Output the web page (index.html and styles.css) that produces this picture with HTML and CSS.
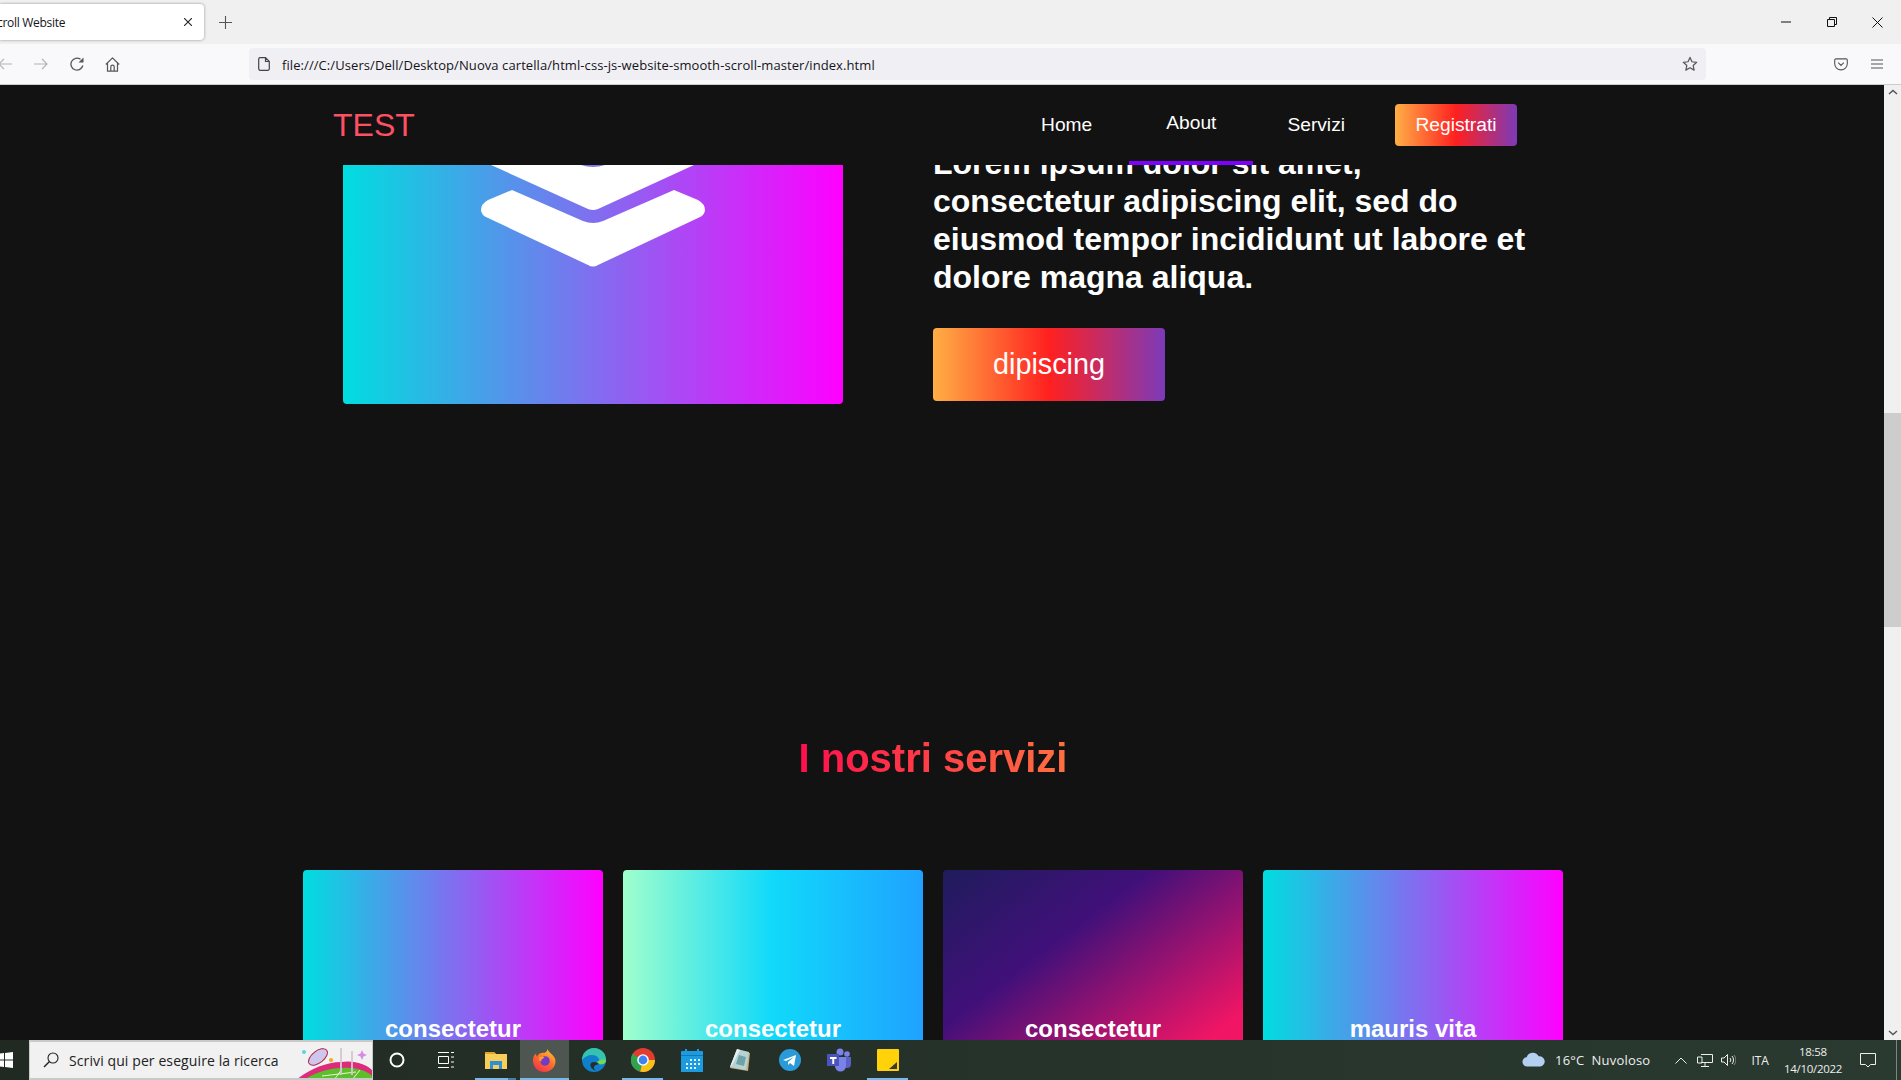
FILE: index.html
```html
<!DOCTYPE html>
<html lang="en">
  <head>
    <title>Smooth Scroll Website</title>
    <meta charset="utf-8" />
    <link rel="stylesheet" href="styles.css">
  </head>
  <body>
    <div class="tabstrip">
      <div class="tab">
        <span class="tab-title">croll Website</span>
        <svg class="tab-close" width="8" height="8" viewBox="0 0 8 8"><path d="M0 0l8 8M8 0L0 8" stroke="#222" stroke-width="1.100" fill="none"/></svg>
      </div>
      <svg class="tab-new" width="13" height="13" viewBox="0 0 13 13"><path d="M6.500 0v13M0 6.500h13" stroke="#555" stroke-width="1.100" fill="none"/></svg>
      <div class="win-buttons">
        <svg width="10" height="10" viewBox="0 0 10 10"><path d="M0 5h10" stroke="#111" fill="none"/></svg>
        <svg width="10" height="10" viewBox="0 0 10 10"><path d="M.5 2.500h7v7h-7zM2.500 2.500v-2h7v7h-2" stroke="#111" fill="none"/></svg>
        <svg width="11" height="11" viewBox="0 0 11 11"><path d="M.5.5l10 10M10.500.5l-10 10" stroke="#111" fill="none"/></svg>
      </div>
    </div>

    <div class="toolbar">
      <svg class="tool back" width="14" height="12" viewBox="0 0 14 12"><path d="M14 6H1M6 1L1 6l5 5" stroke="#b4b4b8" stroke-width="1.200" fill="none"/></svg>
      <svg class="tool forward" width="14" height="12" viewBox="0 0 14 12"><path d="M0 6h13M8 1l5 5-5 5" stroke="#b4b4b8" stroke-width="1.200" fill="none"/></svg>
      <svg class="tool reload" width="14" height="14" viewBox="0 0 14 14"><path d="M12.800 8.500A6 6 0 1 1 10.500 2.300" stroke="#55555b" stroke-width="1.300" fill="none"/><path d="M13.500 .5v5h-5z" fill="#55555b"/></svg>
      <svg class="tool home" width="15" height="15" viewBox="0 0 15 15"><path d="M.8 7.500L7.500.9l6.700 6.600M2.500 6.200v8h10v-8M5.800 14.200V9.800a1.700 1.700 0 0 1 3.400 0v4.400" stroke="#55555b" stroke-width="1.200" stroke-linejoin="round" fill="none"/></svg>
      <div class="urlbar">
        <svg width="12" height="14" viewBox="0 0 12 14"><path d="M2 .7h5.500L11.300 4.500v7.300a1.500 1.500 0 0 1-1.500 1.500H2A1.500 1.500 0 0 1 .7 11.800V2A1.500 1.500 0 0 1 2 .7zM7.500.7v3.800h3.800" stroke="#444" stroke-width="1.200" fill="none"/></svg>
        <span class="url">file:///C:/Users/Dell/Desktop/Nuova cartella/html-css-js-website-smooth-scroll-master/index.html</span>
        <svg class="star" width="16" height="16" viewBox="0 0 17 17"><path d="M8.500 1.500l2.100 4.600 5 .6-3.700 3.400 1 4.900-4.400-2.500-4.400 2.500 1-4.900L1.400 6.700l5-.6z" stroke="#55555b" stroke-width="1.300" stroke-linejoin="round" fill="none"/></svg>
      </div>
      <svg class="pocket" width="14" height="13" viewBox="0 0 15 14"><path d="M2 1h11a1.300 1.300 0 0 1 1.300 1.300V6a6.800 6.800 0 0 1-13.600 0V2.300A1.300 1.300 0 0 1 2 1zM4.500 5l3 3 3-3" stroke="#55555b" stroke-width="1.200" fill="none"/></svg>
      <svg class="menu" width="12" height="10" viewBox="0 0 12 10"><path d="M0 1h12M0 5h12M0 9h12" stroke="#55555b" stroke-width="1.100" fill="none"/></svg>
    </div>

    <div class="viewport">
      <div class="page">
        <nav class="navbar">
          <a class="logo">TEST</a>
          <ul class="nav-links">
            <li class="nav-item"><a>Home</a></li>
            <li class="nav-item active"><a>About</a></li>
            <li class="nav-item"><a>Servizi</a></li>
            <li class="nav-item"><a class="nav-btn">Registrati</a></li>
          </ul>
        </nav>

        <div class="content">
          <section class="about">
            <div class="about-img">
              <svg width="224" height="103" viewBox="0 0 224 103">
                <path d="M10 0L107 44Q112 46 117 44L213 0Z" fill="#fff"/>
                <path d="M100 0Q112 4 124 0Z" fill="#7d77ec"/>
                <path d="M31 25L102 56Q112 60 122 56L193 25L217 35Q224 39 224 45Q224 50 217 53L117 100Q112 103 107 100L7 53Q0 50 0 45Q0 39 7 35Z" fill="#fff"/>
              </svg>
            </div>
            <div class="about-text">
              <h2>Lorem ipsum dolor sit amet,<br>consectetur adipiscing elit, sed do<br>eiusmod tempor incididunt ut labore et<br>dolore magna aliqua.</h2>
              <a class="main-btn">dipiscing</a>
            </div>
          </section>

          <section class="services">
            <h1>I nostri servizi</h1>
            <div class="cards">
              <div class="card card-1"><h3>consectetur</h3></div>
              <div class="card card-2"><h3>consectetur</h3></div>
              <div class="card card-3"><h3>consectetur</h3></div>
              <div class="card card-1"><h3>mauris vita</h3></div>
            </div>
          </section>
        </div>
      </div>
      <div class="scrollbar">
        <svg width="10" height="6" viewBox="0 0 10 6"><path d="M1 5l4-3.500L9 5" stroke="#555" stroke-width="1.500" fill="none"/></svg>
        <div class="track"><div class="thumb"></div></div>
        <svg width="10" height="6" viewBox="0 0 10 6"><path d="M1 1l4 3.500L9 1" stroke="#555" stroke-width="1.500" fill="none"/></svg>
      </div>
    </div>

    <div class="taskbar">
      <svg class="win-logo" width="16" height="16" viewBox="0 0 16 16"><path d="M0 2l7-1v6.500H0zM8 .9L16 0v7.500H8zM0 8.500h7V15l-7-1zM8 8.500h8V16l-8-1.100z" fill="#fff"/></svg>
      <div class="search">
        <svg width="16" height="16" viewBox="0 0 16 16"><circle cx="10" cy="6" r="5" stroke="#222" stroke-width="1.100" fill="none"/><path d="M6.500 9.500L1 15" stroke="#222" stroke-width="1.400"/></svg>
        <span>Scrivi qui per eseguire la ricerca</span>
        <svg class="doodle" width="76" height="38" viewBox="0 0 76 38">
          <path d="M0 38C12 28 30 20 45 20C58 18 70 22 76 28V38Z" fill="#dd2a7b"/>
          <path d="M8 38C16 32 32 26 46 26C58 25 70 28 76 34V38Z" fill="#5cbf2a"/>
          <path d="M26 34L60 30M38 38L46 27M56 38L64 28" stroke="#e8f5d8" fill="none"/>
          <ellipse cx="22" cy="15" rx="11" ry="6" transform="rotate(-38 22 15)" fill="#cfc6ee" stroke="#b3213f"/>
          <path d="M45 6V33M56 9V33" stroke="#d8c4d0" stroke-width="1.800"/>
          <path d="M66 8l1.500 3.500 3.500 1.500-3.500 1.500-1.500 3.500-1.500-3.500-3.500-1.500 3.500-1.500z" fill="#d88ae0"/>
          <circle cx="8" cy="10" r="2" fill="#5fd0e8"/>
          <circle cx="35" cy="18" r="2" fill="#f5a623"/>
        </svg>
      </div>
      <div class="task-icons">
        <span class="task-slot"><svg width="16" height="16" viewBox="0 0 16 16"><circle cx="8" cy="8" r="6.500" stroke="#fff" stroke-width="2" fill="none"/></svg></span>
        <span class="task-slot"><svg width="16" height="16" viewBox="0 0 16 16"><path d="M0 .5h11M.5 4.500h10v7H.5zM0 15.500h11M13 .5h3M13 5h3M13 10h3M13 15h3" stroke="#fff" fill="none"/></svg></span>
        <span class="task-slot open explorer">
          <svg width="22" height="18" viewBox="0 0 22 18"><path d="M0 1h9l2 2h11v15H0z" fill="#f7cf58"/><path d="M0 1h9l2 2H0z" fill="#e0a42a"/><path d="M5 10h12v8h-3v-4H8v4H5z" fill="#2f8fd8"/></svg>
        </span>
        <span class="task-slot open current">
          <svg width="23" height="23" viewBox="0 0 24 24">
            <defs><linearGradient id="fox" x1="0.8" y1="0" x2="0.2" y2="1"><stop offset="0" stop-color="#ffc62e"/><stop offset=".5" stop-color="#ff6a2c"/><stop offset="1" stop-color="#f0304f"/></linearGradient></defs>
            <path d="M15 0c1 3 6 6 8 10 2 7-3 14-11 14C5 24 0 19 0 12 0 9 1 6 3 5l1 3c2-3 4-4 6-4 3 0 5-1 5-4z" fill="url(#fox)"/>
            <circle cx="12.500" cy="12.500" r="5" fill="#6f3bc8"/>
            <path d="M6 9c3-2 5-1 6 0-2 1-4 2-3 4-2 0-3-2-3-4z" fill="#ff9a2e"/>
          </svg>
        </span>
        <span class="task-slot">
          <svg width="24" height="24" viewBox="0 0 24 24"><circle cx="12" cy="12" r="12" fill="#1180cc"/><path d="M12 0A12 12 0 0 1 24 12C24 16 20 17 17 16C19 12 16 7 10 7C6 7 2 9 0 12A12 12 0 0 1 12 0Z" fill="#35c3b0"/><path d="M24 12C24 16 20 17 17 16C15 15.500 15 14 16 13C18 12 22 10 24 12Z" fill="#74d857"/><path d="M17 16C15 14 11 13 9 15C7 18 10 22 15 23C12 22 11 19 13 17.500C14 16.800 16 16.500 17 16Z" fill="#23302a"/></svg>
        </span>
        <span class="task-slot open short">
          <svg width="24" height="24" viewBox="0 0 24 24"><circle cx="12" cy="12" r="12" fill="#e33b2e"/><path d="M12 12h12A12 12 0 0 1 9 23.600z" fill="#f7c31b"/><path d="M12 12L9 23.600A12 12 0 0 1 1.500 6z" fill="#2ea44f"/><circle cx="12" cy="12" r="5.800" fill="#fff"/><circle cx="12" cy="12" r="4.400" fill="#3f82f0"/></svg>
        </span>
        <span class="task-slot">
          <svg width="22" height="23" viewBox="0 0 22 23"><path d="M0 3a1 1 0 0 1 1-1h20a1 1 0 0 1 1 1v20H0z" fill="#1b9be0"/><path d="M4 0h2v5H4zM16 0h2v5h-2z" fill="#1b9be0"/><path d="M0 6h22v1H0z" fill="#0f78b8"/><path d="M9 10h2v2H9zM13 10h2v2h-2zM17 10h2v2h-2zM5 14h2v2H5zM9 14h2v2H9zM13 14h2v2h-2zM17 14h2v2h-2zM5 18h2v2H5zM9 18h2v2H9zM13 18h2v2h-2z" fill="#e3f3fc"/></svg>
        </span>
        <span class="task-slot">
          <svg width="21" height="23" viewBox="0 0 21 23"><path d="M7 1l13 3-2 18-18-3z" fill="#c9b083"/><path d="M7 0l12 3-3 18-16-3z" fill="#b4d4d4"/><path d="M7 0l3 1-8 15-2 2z" fill="#e6f0f0"/><path d="M9 6l7 2-2 9-8-2z" fill="#6fa3a8"/></svg>
        </span>
        <span class="task-slot">
          <svg width="22" height="22" viewBox="0 0 22 22"><circle cx="11" cy="11" r="11" fill="#2a9bd8"/><path d="M4 11l13-5-2 11-4-3-2 2v-3l6-5-8 4z" fill="#fff"/></svg>
        </span>
        <span class="task-slot">
          <svg width="24" height="24" viewBox="0 0 24 24"><circle cx="20" cy="6" r="2.800" fill="#7b83eb"/><circle cx="13" cy="4" r="3.500" fill="#7b83eb"/><path d="M16 9h8v7a4 4 0 0 1-8 0z" fill="#5a62c8"/><path d="M8 9h11v9a5.500 5.500 0 0 1-11 0z" fill="#7b83eb"/><path d="M0 6h12v12H0z" fill="#4b53bc"/><path d="M3 9h6.500v2H7.200v5H5.300v-5H3z" fill="#fff"/></svg>
        </span>
        <span class="task-slot open short">
          <svg width="22" height="22" viewBox="0 0 22 22"><path d="M1 0h20a1 1 0 0 1 1 1v20a1 1 0 0 1-1 1H1a1 1 0 0 1-1-1V1a1 1 0 0 1 1-1z" fill="#ffd20a"/><path d="M20 13v7h-8z" fill="#3a3a3a"/></svg>
        </span>
      </div>
      <div class="tray">
        <svg width="24" height="16" viewBox="0 0 26 16"><path d="M6 15a5 5 0 0 1-1-10 7 7 0 0 1 13-1 5.500 5.500 0 0 1 2 11z" fill="#b4d0f0"/></svg>
        <span class="weather">16°C&nbsp; Nuvoloso</span>
        <svg class="tray-up" width="12" height="7" viewBox="0 0 12 7"><path d="M.5 6.500L6 1l5.500 5.500" stroke="#eee" fill="none"/></svg>
        <svg class="tray-net" width="16" height="13" viewBox="0 0 16 13"><path d="M4 .5h11.500v8H4M.5 3h4.500v6H.5zM8 8.500v3.500M4 12.500h8" stroke="#eee" fill="none"/></svg>
        <svg class="tray-sound" width="15" height="12" viewBox="0 0 15 12"><path d="M.5 4h2.500l3.500-3.500v11L3 8H.5zM9 4a3 3 0 0 1 0 4M11 2a6 6 0 0 1 0 8" stroke="#eee" fill="none"/><path d="M13 1a8 8 0 0 1 0 10" stroke="#888" fill="none"/></svg>
        <span class="lang">ITA</span>
        <div class="clock"><span>18:58</span><span>14/10/2022</span></div>
        <svg class="notify" width="16" height="15" viewBox="0 0 16 15"><path d="M.5.500h15v11h-5l-2.500 2.500-2.500-2.500h-5z" stroke="#eee" fill="none"/></svg>
        <div class="show-desktop"></div>
      </div>
    </div>
  </body>
</html>
```

FILE: styles.css
```css
* {
  box-sizing: border-box;
  margin: 0;
  padding: 0;
}
html,
body {
  height: 100%;
  overflow: hidden;
}
body {
  display: flex;
  flex-direction: column;
  font-family: "Liberation Sans", Arial, sans-serif;
  background: #121212;
}

/* browser chrome */
.tabstrip {
  height: 44px;
  flex: none;
  display: flex;
  align-items: center;
  background: #f0f0f0;
}
.tab {
  width: 204px;
  height: 36px;
  padding-right: 12px;
  display: flex;
  align-items: center;
  justify-content: space-between;
  background: #fff;
  border-radius: 0 4px 4px 0;
  box-shadow: 0 0 3px rgba(0, 0, 0, 0.4);
}
.tab-title {
  margin-left: -3px;
  font-family: "Open Sans", sans-serif;
  font-size: 12px;
  color: #15141a;
  letter-spacing: -0.3px;
}
.tab-new {
  margin-left: 15px;
}
.win-buttons {
  margin-left: auto;
  width: 120px;
  display: flex;
  justify-content: space-between;
  align-items: center;
  padding-right: 18px;
}
.toolbar {
  height: 41px;
  flex: none;
  display: flex;
  align-items: center;
  background: #f9f9fb;
  border-bottom: 1px solid #ccc;
}
.back {
  margin-left: -2px;
}
.forward,
.reload {
  margin-left: 22px;
}
.home {
  margin-left: 21px;
}
.urlbar {
  width: 1457px;
  height: 32px;
  margin-left: 129px;
  display: flex;
  align-items: center;
  gap: 12px;
  padding: 0 8px 0 9px;
  background: #f0f0f4;
  border-radius: 4px;
}
.url {
  padding-top: 1px;
  font-family: "Open Sans", sans-serif;
  font-size: 13px;
  letter-spacing: 0.08px;
  color: #15141a;
}
.star {
  margin-left: auto;
}
.pocket {
  margin-left: 128px;
}
.menu {
  margin-left: 23px;
}

/* page */
.viewport {
  flex: 1;
  min-height: 0;
  display: flex;
}
.page {
  flex: 1;
  min-width: 0;
  display: flex;
  flex-direction: column;
  overflow: hidden;
  background: #121212;
  color: #fff;
}
.navbar {
  height: 80px;
  flex: none;
  display: flex;
  align-items: center;
  justify-content: space-between;
  padding: 0 367px 0 333px;
}
.logo {
  font-size: 32px;
  color: #ff4f63;
}
.nav-links {
  display: flex;
  align-items: center;
  list-style: none;
  font-size: 19.200px;
  height: 80px;
}
.nav-item {
  height: 100%;
  padding: 0 37px;
  display: flex;
  align-items: center;
}
.nav-item:nth-child(3) {
  padding: 0 38px 0 34px;
}
.nav-item:last-child {
  padding: 0;
  margin-left: 12px;
}
.nav-item.active {
  border-bottom: 4px solid #8000ff;
}
.nav-btn {
  display: flex;
  align-items: center;
  justify-content: center;
  width: 122px;
  height: 42px;
  border-radius: 4px;
  background: linear-gradient(to right, #ffaf45, #ff2020 50%, #7c3ab8);
}

/* the page is scrolled: the top of the text goes under the nav */
.content {
  flex: 1;
  min-height: 0;
  overflow: hidden;
}
.about {
  display: flex;
  gap: 90px;
  padding-left: 343px;
  height: 239px;
  margin-bottom: 331px;
}
.about-img {
  width: 500px;
  height: 239px;
  flex: none;
  display: flex;
  justify-content: center;
  align-items: flex-start;
  border-radius: 0 0 4px 4px;
  background: linear-gradient(to right, #00dde0, #ff00ff);
}
.about-text {
  margin-top: -21px;
}
.about-text h2 {
  font-size: 32px;
  line-height: 38px;
  font-weight: bold;
  white-space: nowrap;
  margin-bottom: 32px;
}
.main-btn {
  display: flex;
  align-items: center;
  justify-content: center;
  width: 232px;
  height: 73px;
  border-radius: 4px;
  font-size: 28.800px;
  background: linear-gradient(to right, #ffaf45, #ff2020 50%, #7c3ab8);
}
.services {
  width: 1866px;
}
.services h1 {
  width: fit-content;
  margin: 0 auto;
  font-size: 40px;
  line-height: 46px;
  background: linear-gradient(to right, #ff0f4d, #ff7040);
  -webkit-background-clip: text;
  background-clip: text;
  color: transparent;
}
.cards {
  display: flex;
  gap: 20px;
  margin: 89px 0 0 303px;
}
.card {
  width: 300px;
  height: 300px;
  flex: none;
  border-radius: 4px;
  padding-top: 145px;
  text-align: center;
}
.card h3 {
  font-size: 24px;
}
.card-1 {
  background: linear-gradient(to right, #00dde0, #ff00ff);
}
.card-2 {
  background: linear-gradient(to right, #a0ffcc, #10d9fa 50%, #1fa2ff);
}
.card-3 {
  background: linear-gradient(143deg, #1f1c5c, #41107a 30%, #f01565 70%);
}
.scrollbar {
  width: 17px;
  flex: none;
  display: flex;
  flex-direction: column;
  align-items: center;
  padding: 4px 0;
  background: #f0f0f0;
}
.track {
  flex: 1;
  width: 100%;
}
.thumb {
  height: 214px;
  margin-top: 318px;
  background: #cdcdcd;
}

/* windows taskbar */
.taskbar {
  height: 40px;
  flex: none;
  display: flex;
  align-items: center;
  background: linear-gradient(to right, #212a22, #2a3a30);
  color: #fff;
}
.win-logo {
  margin-left: -3px;
  margin-right: 16px;
}
.search {
  position: relative;
  width: 344px;
  height: 40px;
  display: flex;
  align-items: center;
  gap: 10px;
  padding-left: 13px;
  background: #f1f1f1;
  border: 1px solid #c9c9c9;
  border-width: 2px 1px;
  font-family: "Open Sans", sans-serif;
  font-size: 14px;
  letter-spacing: 0.1px;
  color: #222;
  overflow: hidden;
}
.doodle {
  position: absolute;
  right: 0;
  top: 0;
}
.task-icons {
  display: flex;
  height: 40px;
  margin-left: -1px;
}
.task-slot {
  position: relative;
  width: 49px;
  height: 40px;
  display: flex;
  align-items: center;
  justify-content: center;
}
.task-slot:nth-child(3) {
  margin-left: 1px;
}
.task-slot.open::after {
  content: "";
  position: absolute;
  left: 0;
  right: 0;
  bottom: 0;
  height: 2px;
  background: #76b9ed;
}
.task-slot.short::after {
  left: 4px;
  right: 4px;
}
.task-slot.explorer::after {
  left: 4px;
  right: 4px;
  background: linear-gradient(to right, #76b9ed 80%, #4a7ea6 80%);
}
.task-slot.current {
  background: #4d5650;
}
.tray {
  margin-left: auto;
  display: flex;
  align-items: center;
  align-self: stretch;
  font-family: "Open Sans", sans-serif;
  font-size: 13px;
  color: #eee;
}
.weather {
  margin-left: 9px;
  margin-right: 25px;
  letter-spacing: 0.2px;
}
.tray-up {
  margin-right: 10px;
}
.tray-net {
  margin-right: 8px;
}
.tray-sound {
  margin-right: 15px;
}
.lang {
  font-size: 12px;
  margin-right: 15px;
}
.clock {
  display: flex;
  flex-direction: column;
  align-items: center;
  font-size: 11.500px;
  line-height: 17px;
  letter-spacing: -0.3px;
}
.notify {
  margin-left: 18px;
  margin-right: 20px;
}
.show-desktop {
  width: 1px;
  height: 100%;
  margin-right: 4px;
  background: #7d8680;
}
```
